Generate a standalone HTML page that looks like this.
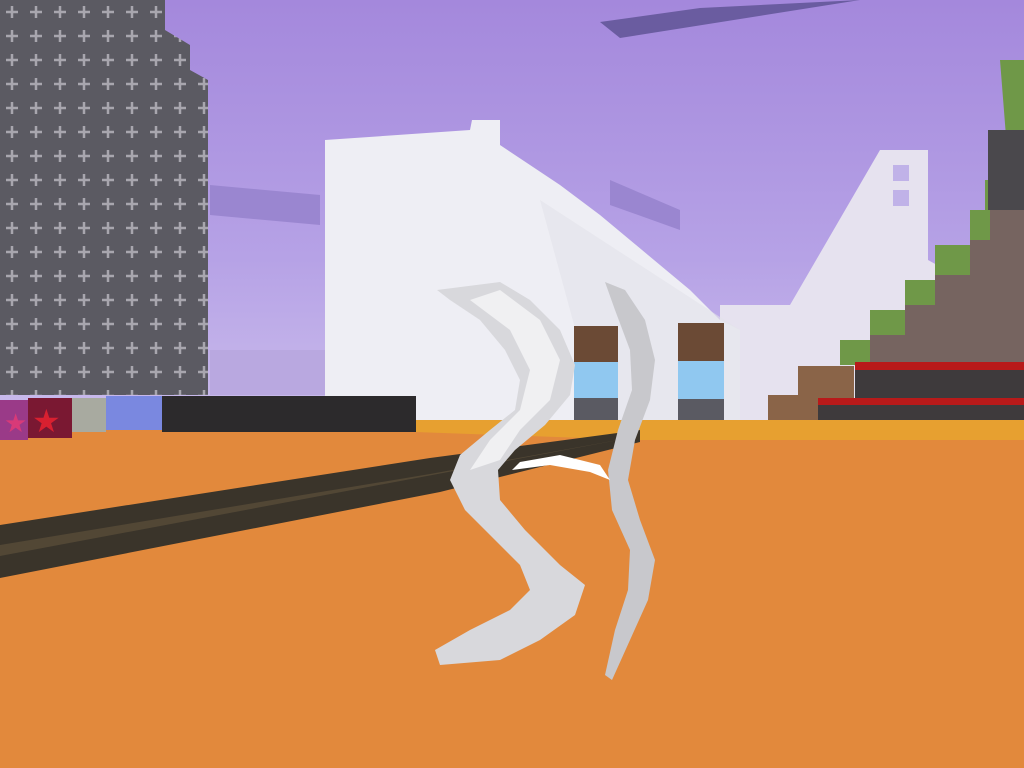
<!DOCTYPE html>
<html><head><style>html,body{margin:0;padding:0;overflow:hidden;width:1024px;height:768px}</style></head><body>
<svg width="1024" height="768" viewBox="0 0 1024 768" xmlns="http://www.w3.org/2000/svg">
<defs>
<linearGradient id="sky" x1="0" y1="0" x2="0" y2="1"><stop offset="0" stop-color="#a488dc"/><stop offset="0.6" stop-color="#b6a2e6"/><stop offset="1" stop-color="#cbbdec"/></linearGradient>
<pattern id="plus" width="24" height="24" patternUnits="userSpaceOnUse"><rect width="24" height="24" fill="#5b5a62"/><path d="M12 6v12M6 12h12" stroke="#a8a6ae" stroke-width="2.5"/></pattern>
</defs>
<rect width="1024" height="430" fill="url(#sky)"/>
<polygon points="600,22 700,8 860,0 620,38" fill="#6a5ca0"/>
<polygon points="210,185 320,195 320,225 210,215" fill="#9a86d0"/>
<polygon points="610,180 680,210 680,230 610,205" fill="#9a86d0"/>
<polygon points="0,0 165,0 165,30 190,45 190,70 208,80 208,395 0,395" fill="url(#plus)"/>
<rect x="210" y="350" width="115" height="45" fill="#b9a8e0"/>
<polygon points="880,150 928,150 928,260 1000,300 1000,420 720,420 720,305 790,305" fill="#e6e2ef"/>
<rect x="893" y="165" width="16" height="16" fill="#c0b2e8"/><rect x="893" y="190" width="16" height="16" fill="#c0b2e8"/>
<polygon points="325,140 470,130 472,120 500,120 500,145 530,165 560,185 600,215 630,240 660,265 690,290 720,320 740,330 740,420 325,420" fill="#eeeef4"/>
<polygon points="540,200 740,330 740,420 600,420" fill="#e2e2ea" opacity="0.6"/>
<rect x="574" y="326" width="44" height="36" fill="#6b4a35"/><rect x="574" y="362" width="44" height="36" fill="#90c8f0"/><rect x="574" y="398" width="44" height="36" fill="#5a5a62"/>
<rect x="678" y="323" width="46" height="38" fill="#6b4a35"/><rect x="678" y="361" width="46" height="38" fill="#90c8f0"/><rect x="678" y="399" width="46" height="38" fill="#5a5a62"/>
<polygon points="1000,60 1024,60 1024,180 985,180 985,210 970,210 970,245 935,245 935,280 905,280 905,310 870,310 870,340 840,340 840,365 1024,365" fill="#6f9848"/>
<polygon points="990,130 1024,130 1024,365 870,365 870,335 905,335 905,305 935,305 935,275 970,275 970,240 990,240" fill="#766460"/>
<rect x="988" y="130" width="36" height="80" fill="#4a484c"/>
<rect x="855" y="362" width="169" height="38" fill="#3e3a3c"/><rect x="855" y="362" width="169" height="8" fill="#b81a1a"/>
<rect x="818" y="398" width="206" height="34" fill="#3e3a3c"/><rect x="818" y="398" width="206" height="7" fill="#b81a1a"/>
<rect x="798" y="366" width="56" height="32" fill="#8a6448"/><rect x="768" y="395" width="50" height="30" fill="#8a6448"/>
<rect x="0" y="425" width="1024" height="343" fill="#e2893c"/>
<polygon points="415,420 1024,420 1024,440 640,440 415,432" fill="#e7a030"/>
<rect x="0" y="400" width="28" height="40" fill="#9a3a88"/><rect x="28" y="398" width="44" height="40" fill="#7a1832"/>
<text x="4" y="432" font-family="DejaVu Sans" font-size="26" fill="#d83a78">★</text><text x="32" y="432" font-family="DejaVu Sans" font-size="32" fill="#d82030">★</text>
<rect x="72" y="398" width="34" height="34" fill="#a8aaa0"/><rect x="106" y="396" width="56" height="34" fill="#7a88e0"/>
<rect x="162" y="396" width="254" height="36" fill="#2c2a2c"/>
<polygon points="0,525 430,458 640,430 640,442 440,492 0,578" fill="#3a342a"/>
<polygon points="0,545 430,474 640,436 0,556" fill="#6a5a40" opacity="0.5"/>
<polygon points="437,290 500,282 530,300 560,330 575,365 570,395 545,425 515,450 498,470 500,500 525,530 560,565 585,585 575,615 540,640 500,660 440,665 435,650 470,630 510,610 530,590 520,565 495,540 465,510 450,480 460,455 490,430 515,410 520,380 505,350 480,320 450,300" fill="#d8d8dc"/>
<polygon points="470,300 500,290 540,320 560,360 550,400 520,430 500,460 470,470 490,440 520,410 530,370 510,330" fill="#f0f0f2"/>
<polygon points="605,282 625,290 645,320 655,360 650,400 635,440 628,480 640,520 655,560 648,600 630,640 612,680 605,675 615,630 628,590 630,550 612,510 608,470 618,430 632,390 630,350 615,310" fill="#c8c8cc"/>
<polygon points="520,462 560,455 600,465 610,480 590,472 550,465 512,470" fill="#ffffff"/>
</svg>
</body></html>
